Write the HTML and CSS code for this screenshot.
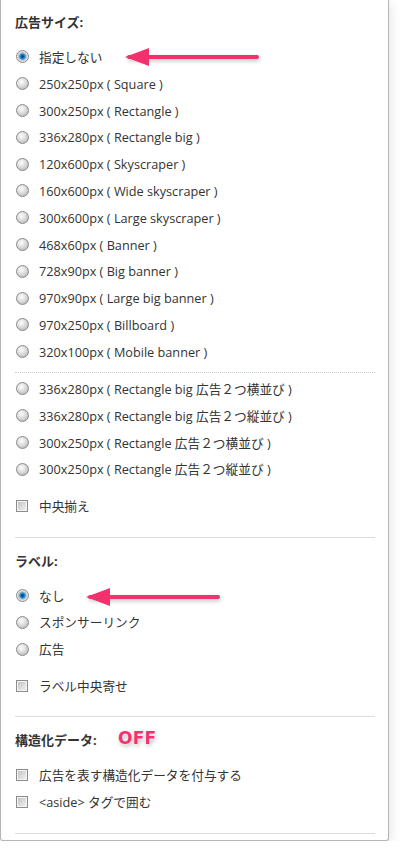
FILE: index.html
```html
<!DOCTYPE html>
<html lang="ja">
<head>
  <meta charset="UTF-8">
  <meta name="viewport" content="width=device-width, initial-scale=1.0">
  <title>広告設定</title>
  <link rel="stylesheet" href="styles.css">
</head>
<body>
  <div class="panel">
    <div class="section">
      <h3>広告サイズ:</h3>
      <div class="group">
        <label class="row"><input type="radio" name="size" checked><span>指定しない</span></label>
        <label class="row"><input type="radio" name="size"><span>250x250px ( Square )</span></label>
        <label class="row"><input type="radio" name="size"><span>300x250px ( Rectangle )</span></label>
        <label class="row"><input type="radio" name="size"><span>336x280px ( Rectangle big )</span></label>
        <label class="row"><input type="radio" name="size"><span>120x600px ( Skyscraper )</span></label>
        <label class="row"><input type="radio" name="size"><span>160x600px ( Wide skyscraper )</span></label>
        <label class="row"><input type="radio" name="size"><span>300x600px ( Large skyscraper )</span></label>
        <label class="row"><input type="radio" name="size"><span>468x60px ( Banner )</span></label>
        <label class="row"><input type="radio" name="size"><span>728x90px ( Big banner )</span></label>
        <label class="row"><input type="radio" name="size"><span>970x90px ( Large big banner )</span></label>
        <label class="row"><input type="radio" name="size"><span>970x250px ( Billboard )</span></label>
        <label class="row"><input type="radio" name="size"><span>320x100px ( Mobile banner )</span></label>
      </div>
      <div class="dotted"></div>
      <div class="group double">
        <label class="row"><input type="radio" name="size"><span>336x280px ( Rectangle big 広告２つ横並び )</span></label>
        <label class="row"><input type="radio" name="size"><span>336x280px ( Rectangle big 広告２つ縦並び )</span></label>
        <label class="row"><input type="radio" name="size"><span>300x250px ( Rectangle 広告２つ横並び )</span></label>
        <label class="row"><input type="radio" name="size"><span>300x250px ( Rectangle 広告２つ縦並び )</span></label>
      </div>
      <div class="group extra">
        <label class="row"><input type="checkbox"><span>中央揃え</span></label>
      </div>
      <div class="arrow arrow-size"></div>
    </div>

    <div class="section">
      <h3>ラベル:</h3>
      <div class="group">
        <label class="row"><input type="radio" name="label" checked><span>なし</span></label>
        <label class="row"><input type="radio" name="label"><span>スポンサーリンク</span></label>
        <label class="row"><input type="radio" name="label"><span>広告</span></label>
      </div>
      <div class="group extra">
        <label class="row"><input type="checkbox"><span>ラベル中央寄せ</span></label>
      </div>
      <div class="arrow arrow-label"></div>
    </div>

    <div class="section">
      <h3>構造化データ:</h3>
      <div class="group">
        <label class="row"><input type="checkbox"><span>広告を表す構造化データを付与する</span></label>
        <label class="row"><input type="checkbox"><span>&lt;aside&gt; タグで囲む</span></label>
      </div>
      <div class="off-note">OFF</div>
    </div>
  </div>
</body>
</html>
```

FILE: styles.css
```css
body {
  margin: 0;
  padding: 0;
  background-color: #fff;
  font-family: 'Open Sans', 'Noto Sans CJK JP', sans-serif;
  font-size: 12.7px;
  color: #333;
}
.panel {
  width: 360px;
  padding: 0 13px 6px 14px;
  background-color: #fff;
  border: 1px solid #b5b5b5;
  border-top: none;
  border-radius: 0 0 3px 3px;
  box-shadow: 1px 3px 12px rgba(0,0,0,0.12);
}
.section {
  position: relative;
  padding: 12px 0 17px;
  border-bottom: 1px solid #dcdcdc;
}
.section + .section {
  padding-top: 13px;
}
h3 {
  margin: 0 0 11.6px;
  font-size: 13px;
  line-height: 20px;
  font-weight: 700;
  color: #333;
}
.row {
  display: flex;
  align-items: center;
  height: 26.8px;
  cursor: pointer;
}
.row span {
  line-height: 18px;
}
.group.extra {
  margin-top: 10px;
}
.dotted {
  margin: 6.8px 0 2.6px;
  border-top: 1px dotted #c8c8c8;
}
input[type=radio],
input[type=checkbox] {
  appearance: none;
  -webkit-appearance: none;
  margin: 0 10px 0 1px;
  width: 13px;
  height: 13px;
  flex-shrink: 0;
  border: 1px solid #8a8a8a;
}
input[type=radio] {
  border-radius: 50%;
  background: radial-gradient(circle at 40% 35%, #ffffff 0, #dcdcdc 45%, #a9a9a9 100%);
}
input[type=radio]:checked {
  background: radial-gradient(circle at 50% 50%, #06355f 0, #1677c2 25%, #47a9e3 38%, #c0c0c0 48%, #ececec 70%, #c4c4c4 100%);
}
input[type=checkbox] {
  width: 12px;
  height: 12px;
  margin-right: 11px;
  border-color: #8c8c8c;
  box-shadow: inset 0 0 0 1px #f4f4f4;
  background: linear-gradient(135deg, #bdbdbd, #f6f6f6);
}
.arrow {
  position: absolute;
  height: 4px;
  background-color: #f5306f;
  border-radius: 2px;
  box-shadow: 1px 2px 4px rgba(0,0,0,0.25);
}
.arrow::before {
  content: '';
  position: absolute;
  left: -2px;
  top: -7px;
  border-right: 24px solid #f5306f;
  border-top: 9px solid transparent;
  border-bottom: 9px solid transparent;
}
.arrow-size {
  left: 112px;
  top: 55px;
  width: 132px;
}
.arrow-label {
  left: 73px;
  top: 57px;
  width: 132px;
}
.off-note {
  position: absolute;
  left: 103px;
  top: 11px;
  font-family: 'DejaVu Sans', sans-serif;
  font-size: 17px;
  font-weight: 700;
  color: #f5306f;
  letter-spacing: 0.2px;
  text-shadow: 0 0 2px #fff, 0 0 2px #fff, 1px 2px 4px rgba(0,0,0,0.3);
}
```
